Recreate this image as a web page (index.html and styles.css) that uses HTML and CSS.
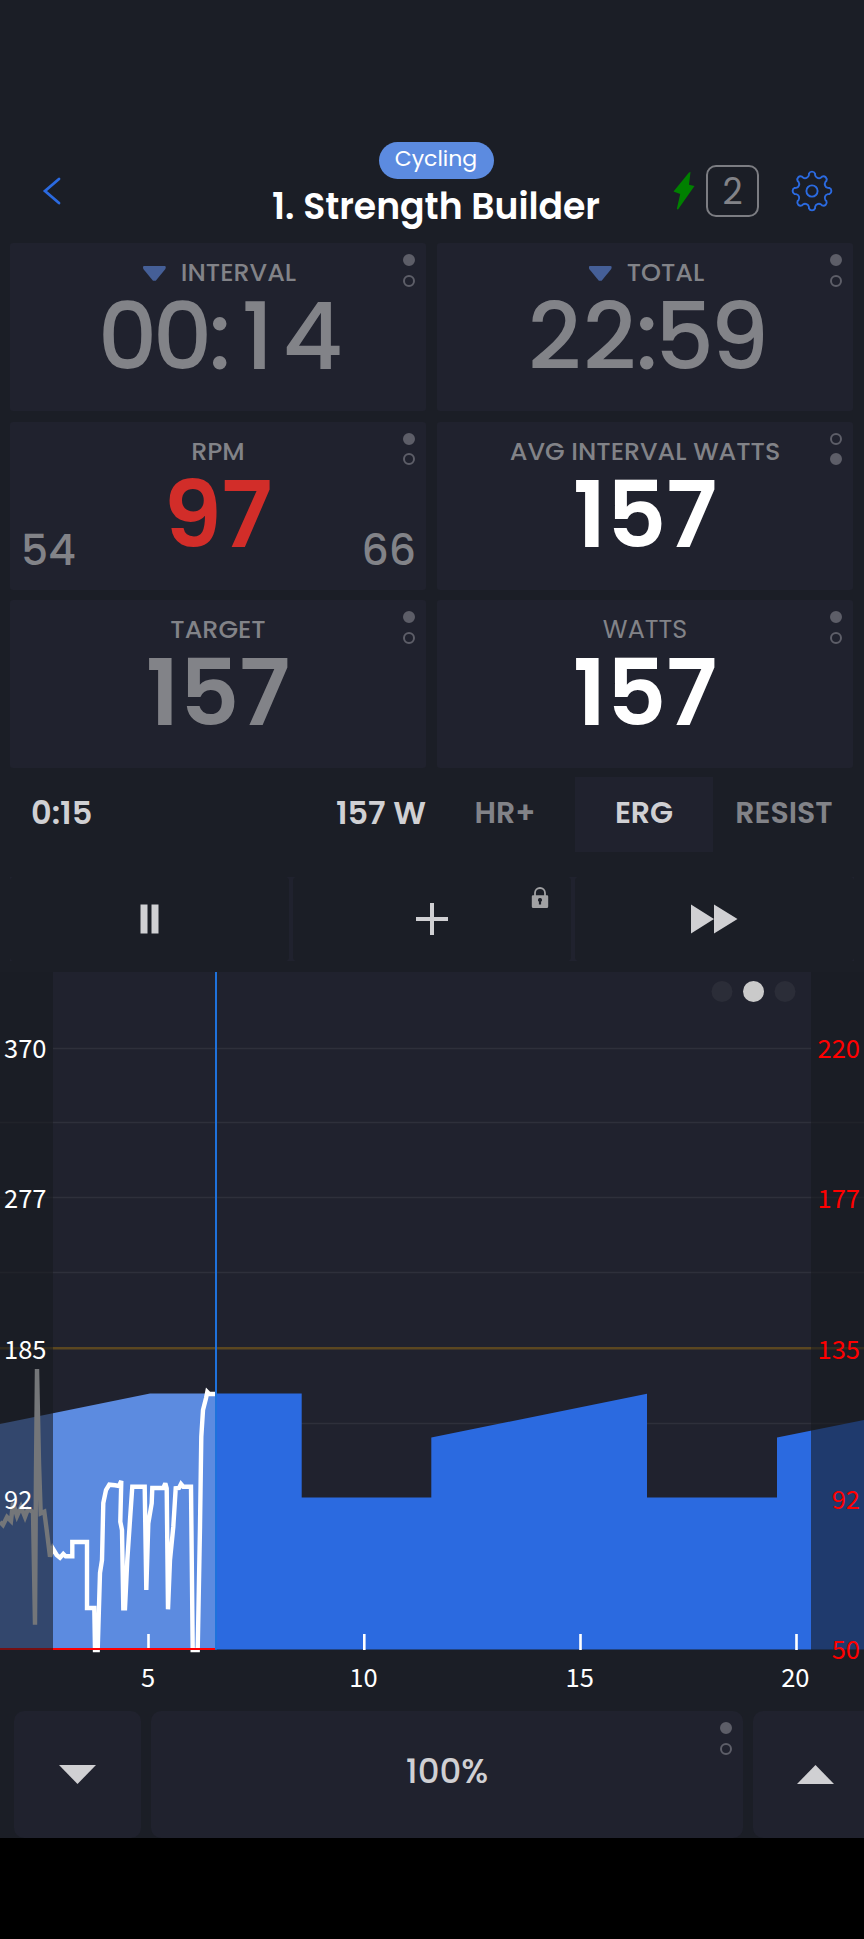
FILE: index.html
```
<!DOCTYPE html>
<html lang="en">
<head>
    <meta charset="UTF-8">
    <meta name="viewport" content="width=device-width, initial-scale=1.0">
    <title>1. Strength Builder</title>
    <link rel="stylesheet" href="styles.css">
</head>
<body>

    <header class="header">
        <svg class="back" viewBox="0 0 20 30"><path d="M17 3 L3 15 L17 27"/></svg>
        <div class="heading">
            <span class="pill">Cycling</span>
            <h1>1. Strength Builder</h1>
        </div>
        <div class="header-icons">
            <svg class="bolt" viewBox="0 0 22 38"><path d="M16 0.5 L17.5 0 L16 12.8 L21.5 14 L5 37.5 L3.8 37 L7.2 22 L0.5 19.5 Z"/></svg>
            <div class="count">2</div>
            <svg class="gear" viewBox="0 0 42 42">
                <path id="gear" d=""/>
                <circle cx="21" cy="21" r="5.6"/>
            </svg>
        </div>
    </header>

    <!-- Data fields -->
    <main class="fields">
        <section class="field">
            <div class="label"><i class="arrow"></i>INTERVAL</div>
            <div class="value time"><span>0</span><span>0</span><b>:</b><span>1</span><span>4</span></div>
            <div class="dots"><i class="on"></i><i></i></div>
        </section>
        <section class="field">
            <div class="label"><i class="arrow"></i>TOTAL</div>
            <div class="value time"><span>2</span><span>2</span><b>:</b><span>5</span><span>9</span></div>
            <div class="dots"><i class="on"></i><i></i></div>
        </section>
        <section class="field">
            <div class="label">RPM</div>
            <div class="value bold red">97</div>
            <div class="limits"><span>54</span><span>66</span></div>
            <div class="dots"><i class="on"></i><i></i></div>
        </section>
        <section class="field">
            <div class="label">AVG INTERVAL WATTS</div>
            <div class="value bold white">157</div>
            <div class="dots"><i></i><i class="on"></i></div>
        </section>
        <section class="field">
            <div class="label">TARGET</div>
            <div class="value bold">157</div>
            <div class="dots"><i class="on"></i><i></i></div>
        </section>
        <section class="field">
            <div class="label light">WATTS</div>
            <div class="value bold white">157</div>
            <div class="dots"><i class="on"></i><i></i></div>
        </section>
    </main>

    <!-- Current interval and trainer mode -->
    <div class="modes">
        <div class="now"><span>0:15</span><span>157 W</span></div>
        <div class="mode">HR+</div>
        <div class="mode active">ERG</div>
        <div class="mode">RESIST</div>
    </div>

    <div class="controls">
        <button class="control">
            <svg viewBox="0 0 20 30"><path d="M1.5 0.5h7v29h-7z M12.5 0.5h7v29h-7z"/></svg>
        </button>
        <button class="control">
            <svg class="plus" viewBox="0 0 32 32"><path d="M14 0h4v14h14v4H18v14h-4V18H0v-4h14z"/></svg>
            <svg class="lock" viewBox="0 0 18 22">
                <path class="shackle" d="M4 9 V6 a5 5 0 0 1 10 0 V9"/>
                <path fill-rule="evenodd" d="M2 8.3h14a1.2 1.2 0 0 1 1.2 1.2v10a1.5 1.5 0 0 1-1.5 1.5H2.3a1.5 1.5 0 0 1-1.5-1.5v-10A1.2 1.2 0 0 1 2 8.3z M9 11a2 2 0 0 0-1.1 3.7V17.6h2.2v-2.9A2 2 0 0 0 9 11z"/>
            </svg>
        </button>
        <button class="control">
            <svg class="forward" viewBox="0 0 47 30"><path d="M0 0.5 L23 15 L0 29.5z M23 0.5 L46.5 15 L23 29.5z"/></svg>
        </button>
    </div>

    <!-- Workout graph -->
    <svg class="chart" viewBox="0 0 864 730">
        <rect class="plot" x="0" y="0" width="864" height="677"/>

        <g class="grid">
            <path d="M53 76.5H811 M0 150.5H864 M0 225.5H864 M0 300.5H864 M0 451.5H864"/>
            <path class="ftp" d="M0 376.2H864"/>
        </g>

        <path class="done" d="M0 677.5 V452 L150 421.5 H216 V677.5z"/>
        <path class="todo" d="M216 677.5 V421.5 H301.7 V525.5 H431.3 V465.5 L647 421.7 V525.5 H777 V465.5 L864 448 V677.5z"/>
        <path class="ticks" d="M148.5 662V678 M364.3 662V678 M580.5 662V678 M796.5 662V678"/>

        <path class="trace" d="M0 550 L3 553 L7 545 L11 549 L13 531 L17 544 L21 535 L25 545 L28 537 L33 540 L35 652.7 L36 500 L37 397 L39 491 L40.7 541.3 L44.3 539.7 L46.7 558 L50 584.7 L52.7 576.3 L56.7 583 L60 585.7 L63.3 582 L65.7 584.3 H72.3 V570 H87 V636 H94.3 L95 678 H97.7 L100 601 L102 588 L103.3 531 L106 518 L109.3 512.7 L115 513.3 L119 514 L121.3 509 L120.3 549.7 L122 558 L123.3 636.3 H125 L127.3 588 L130 548 L132.3 514.7 H144.7 L146.3 618 L148.3 551.3 L151.7 531.3 L152.3 516 H163.3 L165.3 511.3 L166.7 516.3 L168 637.3 L170 588 L173.3 554.7 L175.7 516.3 L179 516 L181 512 L183.3 514.7 H191 L192.7 678 H197.7 L200 554.7 L201.3 464.7 L203 438 L206 426.3 L207.3 420 L209.3 422 H215"/>
        <path class="heart" d="M0 677H215"/>
        <path class="cursor" d="M216 0V677.5"/>

        <rect class="shade" x="0" y="0" width="53" height="678"/>
        <rect class="shade" x="811" y="0" width="53" height="678"/>

        <g class="pager">
            <circle cx="722" cy="19.5" r="10.5"/>
            <circle class="on" cx="753.5" cy="19.5" r="10.5"/>
            <circle cx="785" cy="19.5" r="10.5"/>
        </g>

        <g class="axis">
            <text x="4" y="86">370</text>
            <text x="4" y="236.2">277</text>
            <text x="4" y="387">185</text>
            <text x="4" y="537.2">92</text>
        </g>
        <g class="axis hr">
            <text x="860" y="86">220</text>
            <text x="860" y="236.2">177</text>
            <text x="860" y="387">135</text>
            <text x="860" y="537.2">92</text>
            <text x="860" y="687.2">50</text>
        </g>
        <g class="axis minutes">
            <text x="148" y="714.5">5</text>
            <text x="363.5" y="714.5">10</text>
            <text x="579.7" y="714.5">15</text>
            <text x="795.3" y="714.5">20</text>
        </g>
    </svg>

    <footer class="intensity">
        <button class="step"><svg viewBox="0 0 37 19"><path d="M0 0H37L18.5 19z"/></svg></button>
        <div class="percent">
            <span>100%</span>
            <div class="dots"><i class="on"></i><i></i></div>
        </div>
        <button class="step"><svg viewBox="0 0 37 19"><path d="M0 19H37L18.5 0z"/></svg></button>
    </footer>

    <script>
        // Gear outline: eight rounded teeth around the centre
        const teeth = 8;
        const point = (r, deg) => {
            const a = deg * Math.PI / 180;
            return `${(21 + r * Math.sin(a)).toFixed(2)} ${(21 - r * Math.cos(a)).toFixed(2)}`;
        };
        let d = '';
        for (let i = 0; i < teeth; i++) {
            const c = i * 360 / teeth;
            d += `${i ? 'L' : 'M'}${point(16.2, c - 11)} L${point(17.6, c - 10)} A3.3 3.3 0 0 1 ${point(17.6, c + 10)} L${point(16.2, c + 11)} A3.9 3.9 0 0 0 ${point(16.2, c + 34)} `;
        }
        document.getElementById('gear').setAttribute('d', d + 'Z');
    </script>

</body>
</html>
```
FILE: styles.css
```
* {
    box-sizing: border-box;
}

body {
    margin: 0;
    height: 1939px;
    background: #000;
    font-family: Poppins, Inter, sans-serif;
    color: #828388;
    display: flex;
    flex-direction: column;
    overflow: hidden;
}

svg {
    display: block;
}

button {
    border: 0;
    padding: 0;
    font: inherit;
}

.header {
    flex: none;
    height: 243px;
    padding: 138px 0 0 42px;
    background: #1b1e26;
    display: grid;
    grid-template-columns: 229px 330px 1fr;
}

.back {
    width: 20px;
    height: 30px;
    margin-top: 38px;
    fill: none;
    stroke: #2b6ae0;
    stroke-width: 2.8;
    stroke-linecap: round;
}

.heading {
    display: flex;
    flex-direction: column;
    align-items: center;
    padding-top: 4px;
}

.pill {
    width: 115px;
    height: 37px;
    border-radius: 19px;
    background: #5c8be0;
    color: #fff;
    font-size: 22px;
    line-height: 33px;
    text-align: center;
}

h1 {
    margin: 6px 0 0;
    font-size: 36.2px;
    font-weight: 600;
    line-height: 44px;
    color: #fff;
    white-space: nowrap;
}

.header-icons {
    display: flex;
    align-items: flex-start;
    padding-left: 72px;
}

.bolt {
    width: 22px;
    height: 38px;
    margin: 34px 11px 0 0;
    fill: #008000;
}

.count {
    width: 53px;
    height: 52px;
    margin-top: 27px;
    border: 2px solid #7c7d82;
    border-radius: 10px;
    font-size: 35px;
    line-height: 50px;
    text-align: center;
}

.gear {
    width: 42px;
    height: 42px;
    margin: 32px 0 0 31.5px;
    fill: none;
    stroke: #2b6ae0;
    stroke-width: 1.9;
}

.fields {
    flex: none;
    display: grid;
    grid-template-columns: 1fr 1fr;
    grid-auto-rows: 168px;
    gap: 10.5px 11px;
    padding: 0 11px 0 10px;
    background: #1b1e26;
}

.field {
    position: relative;
    background: #20222e;
    border-radius: 3px;
    text-align: center;
}

.label {
    margin-top: 13px;
    height: 32px;
    display: flex;
    justify-content: center;
    align-items: center;
    font-size: 25.4px;
    line-height: 32px;
    font-weight: 500;
}

.label.light {
    font-weight: 400;
}

.arrow {
    width: 23px;
    height: 16px;
    margin: 3px 15px 0 3px;
    background: #455f97;
    clip-path: polygon(8% 0, 92% 0, 100% 8%, 98% 22%, 56% 96%, 44% 96%, 2% 22%, 0 8%);
}

.value {
    margin-top: 3px;
    font-size: 93px;
    line-height: 90px;
    font-weight: 500;
}

.time {
    display: flex;
    justify-content: center;
    margin-top: 4px;
    padding-left: 4px;
}

.time span {
    width: 55px;
    display: flex;
    justify-content: center;
}

.time b {
    width: 20px;
    display: flex;
    justify-content: center;
    font-weight: 500;
}

.bold {
    font-weight: 600;
}

.red {
    color: #d22d29;
}

.white {
    color: #fff;
}

.limits {
    position: absolute;
    left: 11px;
    right: 10px;
    bottom: 12px;
    display: flex;
    justify-content: space-between;
    font-size: 42.5px;
    line-height: 56px;
    font-weight: 500;
}

.dots {
    position: absolute;
    top: 11px;
    right: 11px;
    display: flex;
    flex-direction: column;
    gap: 8.6px;
}

.dots i {
    width: 12px;
    height: 12px;
    border: 2px solid #5d5e68;
    border-radius: 50%;
}

.dots .on {
    background: #5d5e68;
}

.modes {
    flex: none;
    height: 109px;
    padding-top: 9px;
    background: #1b1e26;
    display: grid;
    grid-template-columns: 435px 140px 138px 142px;
    grid-template-rows: 75px;
    font-size: 30px;
    font-weight: 600;
    line-height: 71px;
}

.now {
    display: flex;
    justify-content: space-between;
    padding: 0 9px 0 31px;
    font-size: 32px;
    color: #d0d0d3;
}

.mode {
    text-align: center;
}

.active {
    background: #20222e;
    color: #d0d0d3;
}

.controls {
    flex: none;
    height: 95px;
    border: solid #1b1e26;
    border-width: 0 10px 11px;
    background: #20222e;
    display: grid;
    grid-template-columns: 1fr 1fr 1fr;
    gap: 4px;
}

.control {
    position: relative;
    background: #1b1e26;
    border-radius: 4px;
    display: flex;
    justify-content: center;
    align-items: center;
    fill: #d0d0d3;
}

.control svg {
    width: 20px;
    height: 30px;
}

.control .plus {
    width: 32px;
    height: 32px;
}

.control .forward {
    width: 47px;
}

.control .lock {
    position: absolute;
    top: 10px;
    right: 22px;
    width: 18px;
    height: 22px;
    fill: #a1a1a3;
}

.control .shackle {
    fill: none;
    stroke: #a1a1a3;
    stroke-width: 1.8;
}

.chart {
    flex: none;
    width: 864px;
    height: 730px;
    background: #1b1e26;
}

.plot {
    fill: #20222e;
}

.grid path {
    stroke: #2e303b;
    stroke-width: 1.5;
}

.grid .ftp {
    stroke: #5b4720;
    stroke-width: 2.4;
}

.done {
    fill: #5c8be0;
}

.todo {
    fill: #2b6ae0;
}

.ticks {
    stroke: #fff;
    stroke-width: 2.6;
}

.trace {
    fill: none;
    stroke: #fff;
    stroke-width: 4.4;
    stroke-linejoin: miter;
    stroke-miterlimit: 3;
}

.heart {
    stroke: #f00;
    stroke-width: 2;
}

.cursor {
    stroke: #1f72dc;
    stroke-width: 2;
}

.shade {
    fill: #171a1f;
    opacity: 0.6;
}

.pager circle {
    fill: #2b2d38;
}

.pager .on {
    fill: #cacaca;
}

.axis {
    font-family: "Noto Sans CJK JP", sans-serif;
    font-size: 25.5px;
    fill: #fff;
}

.hr {
    fill: #f00;
    text-anchor: end;
}

.minutes {
    text-anchor: middle;
}

.intensity {
    flex: none;
    height: 136px;
    padding: 9px 0 0 14px;
    background: #1b1e26;
    display: grid;
    grid-template-columns: 127px 592px 125px;
    gap: 10px;
}

.step,
.percent {
    position: relative;
    background: #20222e;
    border-radius: 10px;
    display: flex;
    justify-content: center;
    align-items: center;
    fill: #d0d0d3;
}

.step svg {
    width: 37px;
    height: 19px;
}

.percent {
    font-size: 34px;
    font-weight: 500;
    color: #d0d0d3;
    padding-bottom: 6px;
}
```
